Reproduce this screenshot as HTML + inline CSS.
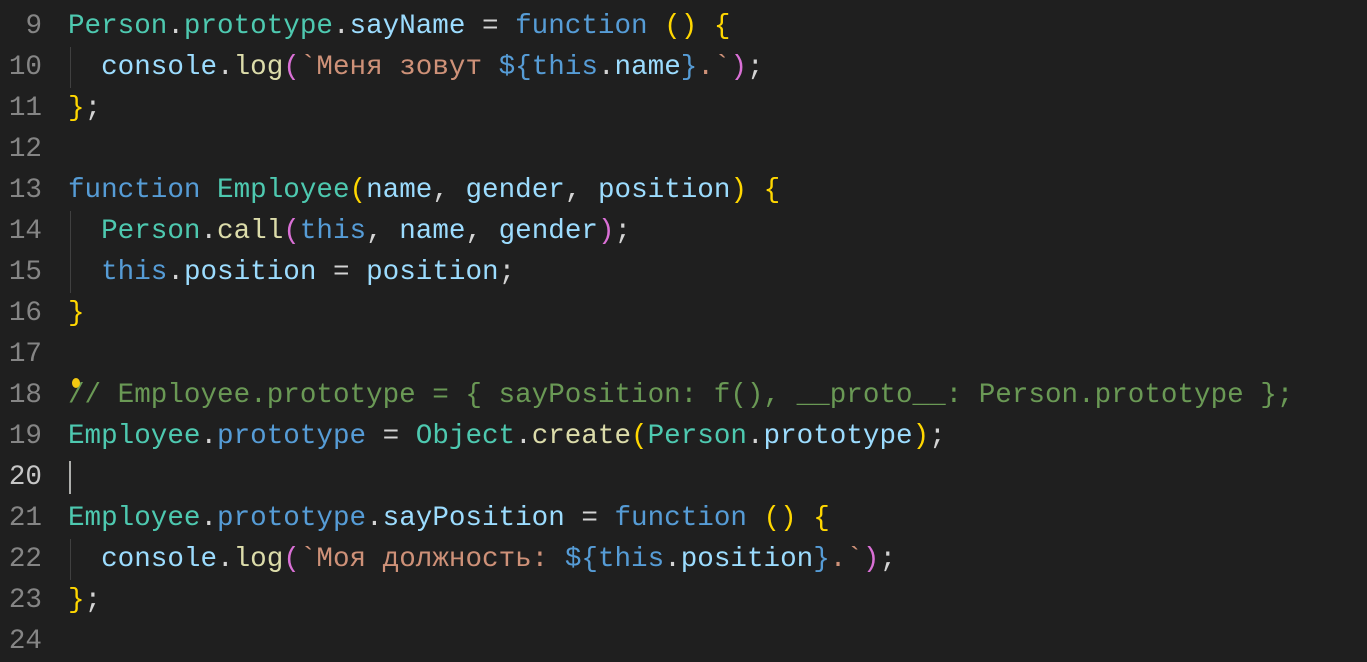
<!DOCTYPE html>
<html><head><meta charset="utf-8"><style>
html,body{margin:0;padding:0;background:#1f1f1f;width:1367px;height:640px;overflow:hidden}
.ed{position:absolute;left:0;top:1px;font-family:"Liberation Mono","DejaVu Sans Mono",monospace;font-size:27.6px;}
.l{position:absolute;left:0;height:41px;line-height:41px;white-space:pre;width:1367px}
.n{position:absolute;left:0;width:42px;text-align:right;color:#858585}
.c{position:absolute;left:68px;color:#d4d4d4}
.k{color:#569cd6}.t{color:#4ec9b0}.v{color:#9cdcfe}.f{color:#dcdcaa}.s{color:#ce9178}
.y{color:#ffd700}.p{color:#da70d6}.m{color:#6a9955}.b{color:#569cd6}
.g{position:absolute;left:70px;width:1px;height:41px;background:#404040}
</style></head><body><div class="ed">
<div class="l" style="top:5px"><span class="n">9</span><span class="c"><span class="t">Person</span>.<span class="t">prototype</span>.<span class="v">sayName</span> = <span class="k">function</span> <span class="y">()</span> <span class="y">{</span></span></div>
<div class="l" style="top:46px"><span class="g"></span><span class="n">10</span><span class="c">  <span class="v">console</span>.<span class="f">log</span><span class="p">(</span><span class="s">`Меня зовут </span><span class="k">${</span><span class="k">this</span>.<span class="v">name</span><span class="k">}</span><span class="s">.`</span><span class="p">)</span>;</span></div>
<div class="l" style="top:87px"><span class="n">11</span><span class="c"><span class="y">}</span>;</span></div>
<div class="l" style="top:128px"><span class="n">12</span></div>
<div class="l" style="top:169px"><span class="n">13</span><span class="c"><span class="k">function</span> <span class="t">Employee</span><span class="y">(</span><span class="v">name</span>, <span class="v">gender</span>, <span class="v">position</span><span class="y">)</span> <span class="y">{</span></span></div>
<div class="l" style="top:210px"><span class="g"></span><span class="n">14</span><span class="c">  <span class="t">Person</span>.<span class="f">call</span><span class="p">(</span><span class="k">this</span>, <span class="v">name</span>, <span class="v">gender</span><span class="p">)</span>;</span></div>
<div class="l" style="top:251px"><span class="g"></span><span class="n">15</span><span class="c">  <span class="k">this</span>.<span class="v">position</span> = <span class="v">position</span>;</span></div>
<div class="l" style="top:292px"><span class="n">16</span><span class="c"><span class="y">}</span></span></div>
<div class="l" style="top:333px"><span class="n">17</span></div>
<div class="l" style="top:374px"><span class="n">18</span><span class="c"><span class="m">// Employee.prototype = { sayPosition: f(), __proto__: Person.prototype };</span></span><span style="position:absolute;left:72px;top:3px;width:8px;height:10px;border-radius:50%;background:#f2c811"></span></div>
<div class="l" style="top:415px"><span class="n">19</span><span class="c"><span class="t">Employee</span>.<span class="b">prototype</span> = <span class="t">Object</span>.<span class="f">create</span><span class="y">(</span><span class="t">Person</span>.<span class="v">prototype</span><span class="y">)</span>;</span></div>
<div class="l" style="top:456px"><span class="n" style="color:#c6c6c6">20</span><span style="position:absolute;left:69px;top:4px;width:2px;height:33px;background:#aeafad"></span></div>
<div class="l" style="top:497px"><span class="n">21</span><span class="c"><span class="t">Employee</span>.<span class="b">prototype</span>.<span class="v">sayPosition</span> = <span class="k">function</span> <span class="y">()</span> <span class="y">{</span></span></div>
<div class="l" style="top:538px"><span class="g"></span><span class="n">22</span><span class="c">  <span class="v">console</span>.<span class="f">log</span><span class="p">(</span><span class="s">`Моя должность: </span><span class="k">${</span><span class="k">this</span>.<span class="v">position</span><span class="k">}</span><span class="s">.`</span><span class="p">)</span>;</span></div>
<div class="l" style="top:579px"><span class="n">23</span><span class="c"><span class="y">}</span>;</span></div>
<div class="l" style="top:620px"><span class="n">24</span></div>
</div></body></html>
